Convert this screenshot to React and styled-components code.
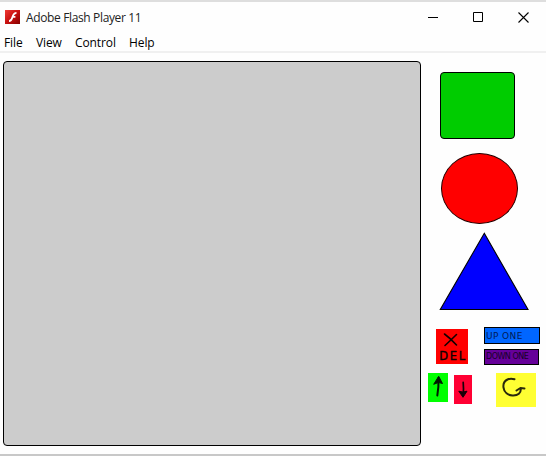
import React from "react";
import styled, { createGlobalStyle } from "styled-components";

const GlobalStyle = createGlobalStyle`
  * { box-sizing: border-box; }
  body { margin: 0; background: #fff; font-family: "Open Sans", "Noto Sans", sans-serif; overflow: hidden; }
  svg { display: block; flex: none; }
`;

const Window = styled.div`
  display: flex;
  flex-direction: column;
  width: 546px;
  height: 456px;
  background: #fefefe;
  border-top: 2px solid #dedede;
  border-bottom: 2px solid #c8c8c8;
`;

const TitleBar = styled.header`
  display: flex;
  align-items: center;
  height: 30px;
  padding-left: 5px;
`;

const Title = styled.h1`
  flex: 1;
  margin: 0 0 0 6px;
  padding-top: 2px;
  font-size: 12px;
  font-weight: 400;
  line-height: 18px;
  letter-spacing: -0.36px;
  color: #222;
  white-space: nowrap;
`;

const WindowButton = styled.button`
  display: flex;
  align-items: center;
  justify-content: center;
  width: 45.5px;
  height: 30px;
  padding: 0;
  border: 0;
  background: none;
`;

const MenuBar = styled.nav`
  display: flex;
  gap: 14px;
  height: 21px;
  padding-left: 4px;
  border-bottom: 2px solid #f0f0f0;
`;

const MenuItem = styled.span`
  width: ${(p) => p.$width}px;
  font-size: 12px;
  line-height: 22px;
  letter-spacing: -0.1px;
  color: #000;
  white-space: nowrap;
`;

const Content = styled.main`
  display: flex;
  flex: 1;
  padding: 8px 0 0 3px;
`;

const Stage = styled.section`
  width: 418px;
  height: 385px;
  border: 1px solid #000;
  border-radius: 4px;
  background: #ccc;
`;

const Palette = styled.aside`
  display: flex;
  flex-direction: column;
  align-items: flex-start;
  padding: 11px 0 0 7px;
`;

const Square = styled.div`
  width: 75px;
  height: 67px;
  margin-left: 12px;
  border: 1px solid #000;
  border-radius: 4px;
  background: #00cc00;
`;

const Circle = styled.div`
  width: 77px;
  height: 71px;
  margin: 14px 0 0 13px;
  border: 1px solid #200;
  border-radius: 50%;
  background: #f00;
`;

const TriangleSlot = styled.div`
  margin: 7px 0 0 11px;
`;

const Controls = styled.div`
  display: flex;
  align-items: flex-start;
  gap: ${(p) => p.$gap}px;
  margin: ${(p) => p.$margin};
`;

const Stack = styled.div`
  display: flex;
  flex-direction: column;
  gap: 5px;
`;

const Tile = styled.button`
  display: flex;
  flex-direction: column;
  align-items: center;
  width: ${(p) => p.$w}px;
  height: ${(p) => p.$h}px;
  margin: ${(p) => p.$top || 0}px 0 0;
  padding: 0;
  border: 0;
  background: ${(p) => p.$color};
`;

const DeleteLabel = styled.span`
  font: 400 11.5px/12px "DejaVu Sans", sans-serif;
  letter-spacing: 1.7px;
  margin: 1px 0 0 2px;
  color: #100;
  -webkit-text-stroke: 0.4px #100;
`;

const OrderButton = styled.button`
  display: flex;
  align-items: center;
  width: ${(p) => p.$w}px;
  height: ${(p) => p.$h}px;
  padding: 0 0 0 1px;
  border: 1px solid #000;
  background: ${(p) => p.$color};
  color: ${(p) => p.$ink};
  font: 400 ${(p) => p.$size}px/12px "DejaVu Sans", sans-serif;
  letter-spacing: ${(p) => p.$spacing}px;
  white-space: nowrap;
`;

const FlashLogo = () => (
  <svg width="15" height="14" viewBox="0 0 15 14">
    <defs>
      <linearGradient id="flashRed" x1="0" y1="0" x2="1" y2="1">
        <stop offset="0" stopColor="#ee3a34" />
        <stop offset="0.5" stopColor="#c8100f" />
        <stop offset="1" stopColor="#840000" />
      </linearGradient>
    </defs>
    <rect width="15" height="14" fill="url(#flashRed)" />
    <path d="M4 11.2C6.8 11.2 7 8.3 7.8 6C8.5 4 9.3 2.8 11.5 2.8M7.4 6.9H10.4" fill="none" stroke="#fff" strokeWidth="1.8" />
  </svg>
);

export default function App() {
  return (
    <>
      <GlobalStyle />
      <Window>
        <TitleBar>
          <FlashLogo />
          <Title>Adobe Flash Player 11</Title>
          <WindowButton aria-label="Minimize">
            <svg width="12" height="11"><path d="M2 5.5H12" stroke="#000" /></svg>
          </WindowButton>
          <WindowButton aria-label="Maximize">
            <svg width="10" height="10"><path d="M.5 .5H9.5V9.5H.5Z" fill="none" stroke="#000" /></svg>
          </WindowButton>
          <WindowButton aria-label="Close">
            <svg width="11" height="11"><path d="M.5 .5L10.5 10.5M10.5 .5L.5 10.5" stroke="#000" strokeWidth="1.1" /></svg>
          </WindowButton>
        </TitleBar>
        <MenuBar>
          <MenuItem $width={18}>File</MenuItem>
          <MenuItem $width={25}>View</MenuItem>
          <MenuItem $width={40}>Control</MenuItem>
          <MenuItem $width={26}>Help</MenuItem>
        </MenuBar>
        <Content>
          <Stage />
          <Palette>
            <Square />
            <Circle />
            <TriangleSlot>
              <svg width="91" height="80">
                <path d="M45.3 2.3L89 78.5H1.3Z" fill="#00f" stroke="#000" strokeWidth="1.1" />
              </svg>
            </TriangleSlot>
            <Controls $gap={16} $margin="16px 0 0 8px">
              <Tile $w={32} $h={35} $top={2} $color="#ff0000">
                <svg width="32" height="20">
                  <path d="M8.5 5Q14 9 20.5 16M20.5 5.5Q15 11 9 16.5" fill="none" stroke="#100" strokeWidth="1.6" strokeLinecap="round" />
                </svg>
                <DeleteLabel>DEL</DeleteLabel>
              </Tile>
              <Stack>
                <OrderButton $w={56} $h={17} $color="#0066ff" $ink="#001b55" $size={9} $spacing={0.4}>UP ONE</OrderButton>
                <OrderButton $w={55} $h={16} $color="#660099" $ink="#180028" $size={8} $spacing={-0.5}>DOWN ONE</OrderButton>
              </Stack>
            </Controls>
            <Controls $gap={6} $margin="8px 0 0">
              <Tile $w={20} $h={29} $color="#00ff00">
                <svg width="20" height="29">
                  <path d="M9.3 22.5Q10.8 14 10.5 5" fill="none" stroke="#001800" strokeWidth="2" strokeLinecap="round" />
                  <path d="M10.7 3.3L14.5 10.5L10.4 9.5L5.7 11.3Z" fill="#001800" stroke="#001800" strokeLinejoin="round" />
                </svg>
              </Tile>
              <Tile $w={18} $h={29} $top={2} $color="#ff0033">
                <svg width="18" height="29">
                  <path d="M9.2 7.3Q9.9 13 9 21" fill="none" stroke="#180008" strokeWidth="1.7" strokeLinecap="round" />
                  <path d="M4.8 16.2L8.8 17L13 16.2L9 22.3Z" fill="#180008" stroke="#180008" strokeLinejoin="round" />
                </svg>
              </Tile>
              <Tile as="div" $w={12} $h={29} $color="transparent" />
              <Tile $w={40} $h={34} $color="#ffff33">
                <svg width="40" height="34">
                  <path d="M18.5 6.2C16.5 5.6 14 5.2 11.5 6.5C8.5 8 7 11 7.5 14.5C8.2 19.5 12 22.3 16.5 22.5C22 22.8 25.3 20 24.7 15.5M20.5 17.5L24.4 15L28.5 15.5" fill="none" stroke="#29290c" strokeWidth="2" strokeLinecap="round" strokeLinejoin="round" />
                </svg>
              </Tile>
            </Controls>
          </Palette>
        </Content>
      </Window>
    </>
  );
}
